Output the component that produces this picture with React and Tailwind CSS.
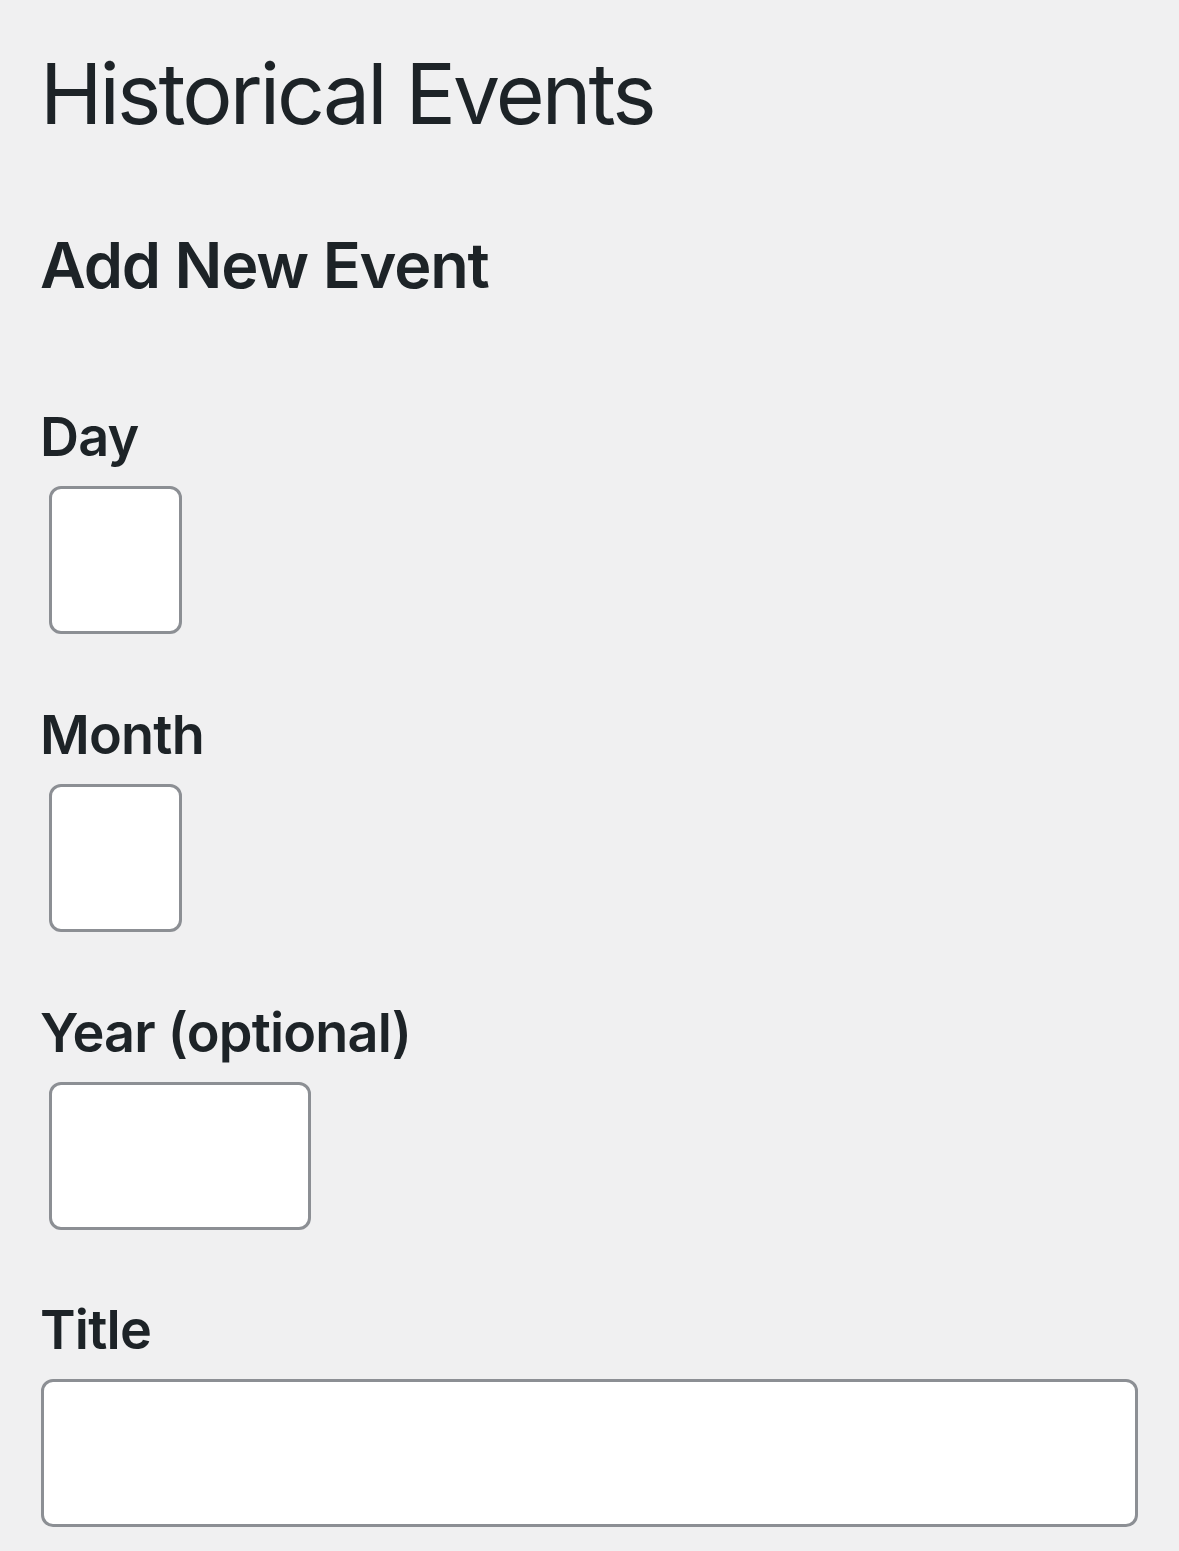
export default function App() {
  const labelCls = "block text-[54px] font-semibold leading-none tracking-[-0.8px] text-[#1d2327]";
  const inputCls = "block h-[148px] rounded-[12px] border-[3px] border-[#8c8f94] bg-white";

  return (
    <div
      className="min-h-[1551px] bg-[#f0f0f1] pl-[40px] pr-[41px] pt-[52px] text-[#1d2327]"
      style={{ fontFamily: "Inter, 'Liberation Sans', sans-serif" }}
    >
      <h1 className="text-[84px] font-normal leading-none tracking-[-2.9px]">Historical Events</h1>
      <h2 className="mt-[98px] text-[63px] font-semibold leading-none tracking-[-1.2px]">Add New Event</h2>

      <form className="mt-[113px] flex flex-col">
        <label className={labelCls}>Day</label>
        <input type="text" className={`${inputCls} ml-[9px] mt-[22px] w-[133px]`} />

        <label className={`${labelCls} mt-[74px]`}>Month</label>
        <input type="text" className={`${inputCls} ml-[9px] mt-[22px] w-[133px]`} />

        <label className={`${labelCls} mt-[74px]`}>Year (optional)</label>
        <input type="text" className={`${inputCls} ml-[9px] mt-[22px] w-[262px]`} />

        <label className={`${labelCls} mt-[73px]`}>Title</label>
        <input type="text" className={`${inputCls} ml-[1px] mt-[22px] w-[1097px]`} />
      </form>
    </div>
  );
}
